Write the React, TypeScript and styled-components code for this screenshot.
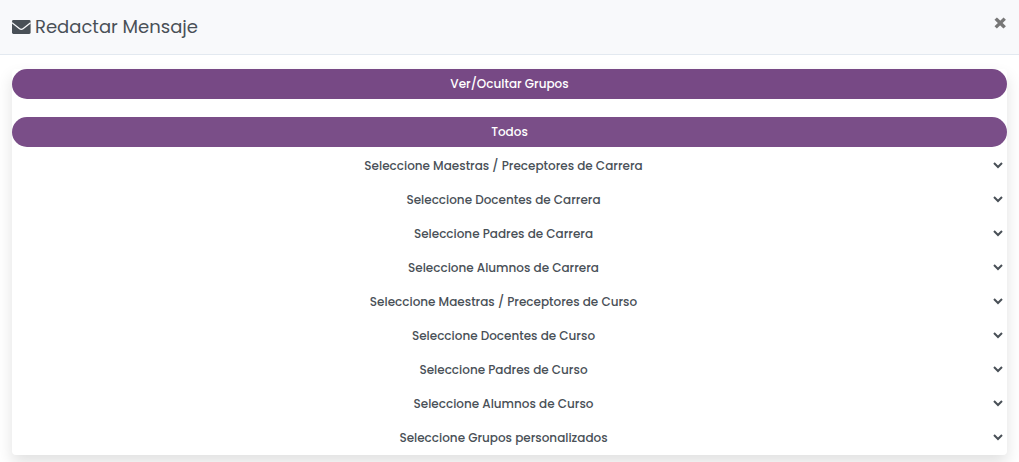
import React from "react";
import styled, { createGlobalStyle } from "styled-components";

const GlobalStyle = createGlobalStyle`
  * { box-sizing: border-box; }
  body {
    margin: 0;
    background: #fff;
    color: #495057;
    font-family: Poppins, Inter, "Open Sans", sans-serif;
    font-size: 12px;
  }
`;

const Header = styled.header`
  display: flex;
  align-items: flex-start;
  justify-content: space-between;
  padding: 12px;
  background: #f8f9fb;
  border-bottom: 1px solid #e3e9f0;
`;

const Title = styled.h1`
  display: flex;
  align-items: center;
  gap: 4px;
  margin: 0;
  font-size: 18px;
  line-height: 30px;
  font-weight: 400;
`;

const CloseButton = styled.button`
  display: flex;
  margin: 5px 0 0;
  padding: 0;
  border: 0;
  background: none;
  color: #777;
  cursor: pointer;
`;

const Body = styled.main`
  padding: 14px 12px;
`;

const Card = styled.section`
  border-radius: 4px;
  background: #fff;
  box-shadow: 0 8px 16px rgba(0, 0, 0, 0.12);
`;

const PillButton = styled.button<{ $spaced?: boolean }>`
  display: block;
  width: 100%;
  height: 30px;
  margin: 0 0 ${(p) => (p.$spaced ? 18 : 0)}px;
  padding: 0;
  border: 0;
  border-radius: 15px;
  background: ${(p) => (p.$spaced ? "#774985" : "#7a4e88")};
  color: #fff;
  font: inherit;
  font-weight: 500;
  line-height: 28px;
  cursor: pointer;
`;

const GroupList = styled.div`
  display: flex;
  flex-direction: column;
  padding: 1px 0;
`;

const GroupSelect = styled.select`
  width: 100%;
  height: 34px;
  margin: 0;
  border: 1px solid transparent;
  background: transparent;
  color: #495057;
  font: inherit;
  font-weight: 500;
  text-align: center;
`;

const groups = [
  "Seleccione Maestras / Preceptores de Carrera",
  "Seleccione Docentes de Carrera",
  "Seleccione Padres de Carrera",
  "Seleccione Alumnos de Carrera",
  "Seleccione Maestras / Preceptores de Curso",
  "Seleccione Docentes de Curso",
  "Seleccione Padres de Curso",
  "Seleccione Alumnos de Curso",
  "Seleccione Grupos personalizados",
];

const EnvelopeIcon = () => (
  <svg width="19" height="15" viewBox="0 0 19 15" aria-hidden="true">
    <rect x="0" y="0" width="18.6" height="14" rx="1.4" fill="#495057" />
    <path d="M0 2.8L7.6 8.7Q9.3 10 11 8.7L18.6 2.8" fill="none" stroke="#f8f9fb" strokeWidth="1.3" />
  </svg>
);

const CloseIcon = () => (
  <svg width="13" height="12" viewBox="0 0 13 12" aria-hidden="true">
    <path d="M2.9 2.8L9.5 9.2M9.5 2.8L2.9 9.2" stroke="currentColor" strokeWidth="3.4" strokeLinecap="square" />
  </svg>
);

export default function App() {
  return (
    <>
      <GlobalStyle />
      <Header>
        <Title>
          <EnvelopeIcon />
          Redactar Mensaje
        </Title>
        <CloseButton type="button" aria-label="Cerrar">
          <CloseIcon />
        </CloseButton>
      </Header>
      <Body>
        <Card>
          <PillButton type="button" $spaced>Ver/Ocultar Grupos</PillButton>
          <PillButton type="button">Todos</PillButton>
          <GroupList>
            {groups.map((label) => (
              <GroupSelect key={label} aria-label={label}>
                <option>{label}</option>
              </GroupSelect>
            ))}
          </GroupList>
        </Card>
      </Body>
    </>
  );
}
